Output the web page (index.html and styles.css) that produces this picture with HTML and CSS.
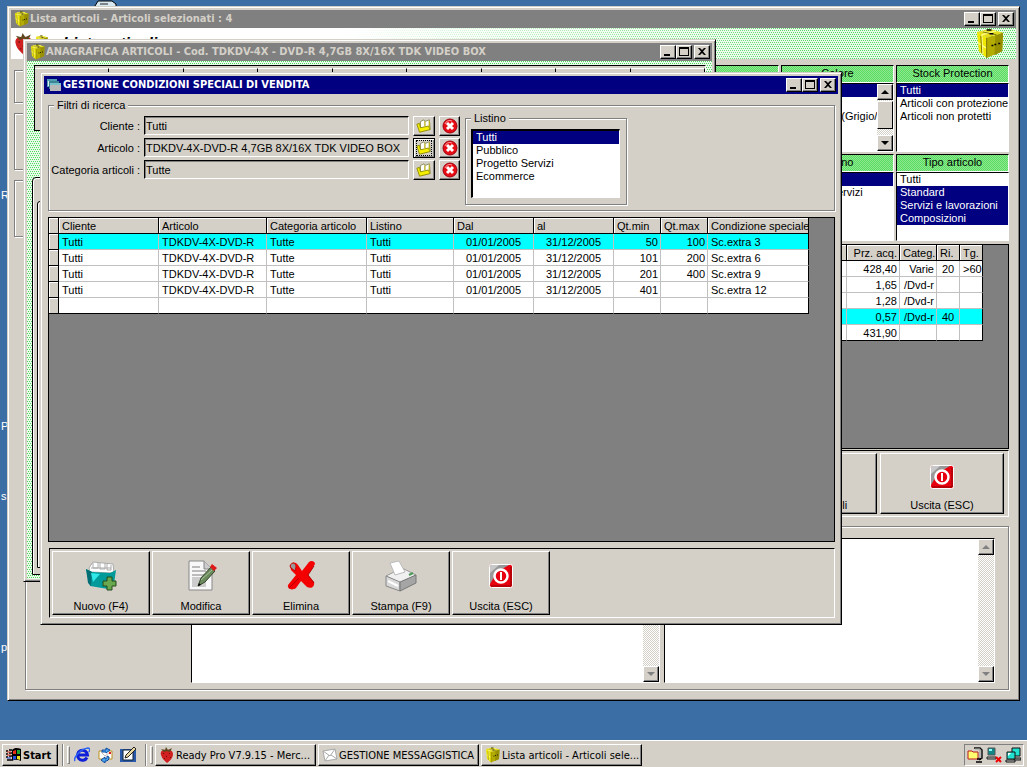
FILE: index.html
```html
<!DOCTYPE html>
<html lang="it">
<head>
<meta charset="utf-8">
<title>Ready Pro - Lista articoli</title>
<link rel="stylesheet" href="styles.css">
</head>
<body>
<svg class="defs" aria-hidden="true">
  <symbol id="cube" viewBox="0 0 32 32">
    <path d="M2 4 15 1 29 5 12 10Z" fill="#e4dc18"/>
    <path d="M2 4 12 10 12 31 4 24Z" fill="#f0e800"/>
    <path d="M12 10 29 5 28 24 12 31Z" fill="#b4ac00"/>
    <path d="M21 8 29 5 28 24 20 28Z" fill="#989000"/>
    <path d="M7 3 20 7M7 7 8 27M3 15 12 21M22 3 7 7" stroke="#fffb80" stroke-width="1.500" fill="none"/>
    <path d="M8 4 22 7M6 8 7 26M12 10 12 31" stroke="#7c7600" fill="none"/>
    <path d="M17 18h2M20 17h2M24 16h2M12 2h5M15 6h4" stroke="#000" stroke-width="1.500"/>
  </symbol>
  <symbol id="berry" viewBox="0 0 16 16">
    <path d="M8 3C3 2 1 5 2 8c1 4 4 6 6 8 3-2 6-5 6-9 0-3-3-5-6-4Z" fill="#d02020"/>
    <path d="M4 6h1v1H4zM7 9h1v1H7zM10 6h1v1h-1zM5 11h1v1H5zM11 10h1v1h-1z" fill="#701010"/>
    <path d="M2 2 6 3 7 0 9 3 13 1 11 5 8 4 5 5Z" fill="#5b4a20"/>
  </symbol>
  <symbol id="windows" viewBox="0 0 14 14">
    <path d="M0 1h10v8H0z" fill="#4f9fb0"/><path d="M1 3h8v5H1z" fill="#d8eef0"/>
    <path d="M2 3h10v8H2z" fill="#3d8391"/><path d="M3 5h11v8H3z" fill="#b8b8b8"/><path d="M3 5h11v2H3z" fill="#78c0cc"/>
  </symbol>
  <symbol id="folder" viewBox="0 0 18 16">
    <path d="M5 3 9 1 10 3 15 1 16 11 5 14Z" fill="#fff" stroke="#8a8a50"/>
    <path d="M1 6 4 5 5 10 14 8 16 12 4 15Z" fill="#f5f000" stroke="#8c8600"/>
    <path d="M10 3 10 8M15 2 15 10" stroke="#b9b020" stroke-width="1.500"/>
  </symbol>
  <symbol id="cancel" viewBox="0 0 16 16">
    <circle cx="8" cy="8" r="7" fill="#e80c14" stroke="#a00010"/>
    <path d="M3 6a5 5 0 0 1 7-3" stroke="#ff9a9a" fill="none"/>
    <path d="m5 5 6 6M11 5l-6 6" stroke="#fff" stroke-width="3"/>
  </symbol>
  <symbol id="new" viewBox="0 0 32 32">
    <path d="M4 8 8 2 28 4 29 13 5 12Z" fill="#fff" stroke="#aaa"/>
    <path d="M8 3v5h5V2M15 3v6h5V3M22 4v6h4V5M6 8h20" stroke="#aaa" fill="none"/>
    <path d="M1 9 7 12 25 13 31 10 29 24 23 29 5 26Z" fill="#009a9a"/>
    <path d="M1 9 7 12 6 26 3 23Z" fill="#006e74"/><path d="M6 13 15 14 8 22Z" fill="#30e8e8"/>
    <path d="M22 17h5v4h4v5h-4v4h-5v-4h-4v-5h4z" fill="#6aa850" stroke="#244a1a"/>
  </symbol>
  <symbol id="edit" viewBox="0 0 32 32">
    <path d="M4 1h15l8 8v21H4z" fill="#f8f8f8" stroke="#888"/><path d="M19 1v8h8" fill="#ccc" stroke="#888"/>
    <path d="M7 7h8M7 11h14M7 15h13" stroke="#bbb" stroke-width="2"/><path d="M7 17h14v10H7z" fill="#ccc"/>
    <path d="m13 26 3-8L26 7l4 4-10 11Z" fill="#6a8a5c" stroke="#33452c"/><path d="m16 20 11-10" stroke="#a9c19c"/>
    <path d="m25 7 2-3 5 4-3 3Z" fill="#e01818"/><path d="m13 26 1-3 2 2Z" fill="#000"/>
  </symbol>
  <symbol id="delete" viewBox="0 0 32 32">
    <path d="M5 6c2-5 6-4 8-1l4 6 7-9c2-2 6-1 6 2l-7 11 6 7c1 5-3 7-7 5l-6-6-5 7c-4 3-9 1-8-3l8-10-5-5Z" fill="#f40000"/>
    <path d="M5 6c2-5 6-3 6 1l-1 4-4-3Z" fill="#999" stroke="#c00"/><path d="m29 6-6 9 6 8M4 28l10-10" stroke="#b00000" fill="none"/>
  </symbol>
  <symbol id="print" viewBox="0 0 32 32">
    <path d="M1 16 17 8 31 15 15 23Z" fill="#f0f0f0" stroke="#999"/>
    <path d="M1 16 15 22V31L1 26Z" fill="#d8d8d8" stroke="#888"/><path d="M15 22 31 15V23L15 31Z" fill="#a5a5a5" stroke="#777"/>
    <path d="M5 3 14 1 20 12 10 15Z" fill="#fff" stroke="#bbb"/>
    <path d="m3 21 10 5" stroke="#fff" stroke-width="2"/><path d="m24 15 4-2" stroke="#4d9a5a" stroke-width="2"/>
  </symbol>
  <symbol id="exit" viewBox="0 0 24 24">
    <rect x=".5" y=".5" width="23" height="23" rx="2" fill="#e80010" stroke="#fff"/>
    <path d="M1 1h19L8 8 1 20Z" fill="#999"/><path d="M1 1h9L1 9Z" fill="#c8c8c8"/>
    <circle cx="12" cy="12" r="6.500" fill="#e80010" stroke="#fff" stroke-width="2.500"/>
    <path d="M12 8V16" stroke="#fff" stroke-width="2"/><path d="M2 22h20V3" stroke="#8c0000" fill="none"/>
  </symbol>
  <symbol id="flag" viewBox="0 0 16 14">
    <path d="M0 3h2M3 2h3M0 6h2M3 5h3M0 9h2M3 8h3M1 12h5" stroke="#000" stroke-width="1.500"/><path d="M1 4h4M1 7h4" stroke="#e03020"/><path d="M1 10h4" stroke="#2040d0"/>
    <path d="M6 2c3-3 6-2 9-1v12c-3-1-6-2-9 0Z" fill="#000"/>
    <path d="M7 3l3-1v4H7z" fill="#e83018"/><path d="M11 2h3v4h-3z" fill="#20a030"/><path d="M7 8h3v3l-3 1z" fill="#2050e0"/><path d="M11 8h3v4l-3-1z" fill="#f0e020"/>
  </symbol>
  <symbol id="ie" viewBox="0 0 16 16">
    <path d="M13 10.500A5 5 0 1 1 13.500 8H5" fill="none" stroke="#1020d8" stroke-width="3"/>
    <path d="M1 14C-1 11 6 2 14 1c2 0 2 2 1 4" fill="none" stroke="#2f66f0" stroke-width="1.500"/>
  </symbol>
  <symbol id="outlook" viewBox="0 0 16 16">
    <path d="M2 4h13v8H2z" fill="#fff" stroke="#b89020"/><path d="m4 5 4 4 5-4" fill="none" stroke="#bbb"/><path d="M12 5h2v2h-2z" fill="#e02020"/>
    <path d="M5 5V3h4V1l4 2-4 3V5Z" fill="#48a8f0" stroke="#1048a0"/><path d="M12 10c0 3-1 4-4 4v2l-4-3 4-3v2c2 0 2-1 2-3Z" fill="#48a8f0" stroke="#1048a0"/>
  </symbol>
  <symbol id="desk" viewBox="0 0 16 16">
    <path d="M0 2h16v13H0z" fill="#2858a8"/><path d="M3 3h10v10H3z" fill="#fff" stroke="#123"/>
    <path d="m5 11 1-3 8-8 2 2-8 8Z" fill="#e8d8a0" stroke="#222"/>
  </symbol>
  <symbol id="mail" viewBox="0 0 16 16">
    <path d="M1 4 13 2 15 12 3 14Z" fill="#fff" stroke="#aaa"/><path d="m1 4 7 5 5-7M3 14l4-6M15 12 9 8" fill="none" stroke="#aaa"/>
  </symbol>
  <symbol id="zip" viewBox="0 0 16 16">
    <path d="M7 1h6l2 2v8l-3 2" fill="none" stroke="#111" stroke-width="1.500"/><path d="M8 2h5v9h-2" fill="none" stroke="#999"/>
    <path d="M1 4h4l1 1h5v7H1z" fill="#ffff70" stroke="#c01818"/><path d="M10 12h4M9 15h6" stroke="#000" stroke-width="1.500"/>
  </symbol>
  <symbol id="netoff" viewBox="0 0 16 16">
    <path d="M2 1h7v7H2z" fill="#108888" stroke="#555"/><path d="M3 2h3v2H3z" fill="#8ff"/><path d="M1 10h9v2H1z" fill="#bbb" stroke="#222"/>
    <path d="m10 10 5 5M15 10l-5 5" stroke="#f00000" stroke-width="2"/>
  </symbol>
  <symbol id="net" viewBox="0 0 16 16">
    <path d="M7 1h8v8H7z" fill="#20e0d0" stroke="#111"/><path d="M9 11h7v2H9z" fill="#aaa" stroke="#111"/>
    <path d="M2 5h8v7H2z" fill="#20e0d0" stroke="#111"/><path d="M3 6h3l-3 3z" fill="#fff"/><path d="M1 13h9v2H1z" fill="#ccc" stroke="#111"/>
  </symbol>
  <symbol id="min" viewBox="0 0 12 10"><path d="M2 7h6v2H2z"/></symbol>
  <symbol id="max" viewBox="0 0 12 10"><path d="M1 0h10v9H1zM2 2v6h8V2z" fill-rule="evenodd"/></symbol>
  <symbol id="close" viewBox="0 0 12 10"><path d="M2 1h2l2 2 2-2h2L7 4.500 10 8H8L6 6 4 8H2l3-3.500z"/></symbol>
  <symbol id="up" viewBox="0 0 8 6"><path d="M0 5 4 1 8 5z"/></symbol>
  <symbol id="down" viewBox="0 0 8 6"><path d="M0 1h8L4 5z"/></symbol>
</svg>

<main class="desktop">
  <span class="shortcut s1">R</span>
  <span class="shortcut s2">P</span>
  <span class="shortcut s3">s</span>
  <span class="shortcut s4">p</span>
  <svg class="deskicon" viewBox="0 0 24 6"><path d="M1 6 4 1h14l4 3v2" fill="#d8e8f0" stroke="#000"/><path d="M6 4h8" stroke="#222"/></svg>

  <section class="window list">
    <header class="title">
      <svg class="i16"><use href="#cube"/></svg>
      <h1>Lista articoli - Articoli selezionati : 4</h1>
      <div class="controls">
        <button aria-label="Riduci"><svg><use href="#min"/></svg></button><button aria-label="Ingrandisci"><svg><use href="#max"/></svg></button><button class="x" aria-label="Chiudi"><svg><use href="#close"/></svg></button>
      </div>
    </header>
    <div class="banner">
      <svg class="logo"><use href="#berry"/></svg>
      <svg class="logo small"><use href="#cube"/></svg>
      <h2>Lista articoli</h2>
      <svg class="box"><use href="#cube"/></svg>
    </div>
    <div class="listbody">
      <div class="filters">
        <div class="strips"><div class="strip first"></div><div class="strip"></div><div class="strip"></div></div>
        <div class="filter"><label class="start-label" for="f1">Marca</label><select id="f1" size="5"><option selected>Tutti</option></select></div>
        <div class="filter"><label for="f2">Colore</label>
          <div class="scrolled"><select id="f2" size="5"><option selected>Tutti</option><option>Bianco</option><option>Multicolore (Grigio/Nero)</option></select>
            <div class="scroll"><button aria-label="Su"><svg><use href="#up"/></svg></button><i class="thumb"></i><button aria-label="Giù"><svg><use href="#down"/></svg></button></div></div></div>
        <div class="filter"><label for="f3">Stock Protection</label><select id="f3" size="5"><option selected>Tutti</option><option>Articoli con protezione</option><option>Articoli non protetti</option></select></div>
        <div class="filter"><label class="start-label" for="f4">Reparto</label><select id="f4" size="5"><option selected>Tutti</option></select></div>
        <div class="filter"><label for="f5">Listino</label><select id="f5" size="5"><option selected>Tutti</option><option>Progetto Servizi</option></select></div>
        <div class="filter"><label for="f6">Tipo articolo</label><select id="f6" size="5" multiple><option>Tutti</option><option selected>Standard</option><option selected>Servizi e lavorazioni</option><option selected>Composizioni</option></select></div>
      </div>
      <div class="grid articles">
        <table>
          <colgroup><col><col class="w53"><col class="w37"><col class="w23"><col class="w23"></colgroup>
          <thead><tr><th></th><th class="num">Prz. acq.</th><th>Categ.</th><th>Ri.</th><th>Tg.</th></tr></thead>
          <tbody>
            <tr><td></td><td class="num">428,40</td><td class="num">Varie</td><td class="mid">20</td><td>&gt;60</td></tr>
            <tr><td></td><td class="num">1,65</td><td class="num">/Dvd-r</td><td></td><td></td></tr>
            <tr><td></td><td class="num">1,28</td><td class="num">/Dvd-r</td><td></td><td></td></tr>
            <tr class="on"><td></td><td class="num">0,57</td><td class="num">/Dvd-r</td><td class="mid">40</td><td></td></tr>
            <tr><td></td><td class="num">431,90</td><td></td><td></td><td></td></tr>
          </tbody>
        </table>
      </div>
      <div class="tools right">
        <button><svg class="i24"><use href="#folder"/></svg><span>Cerca articoli</span></button>
        <button><svg class="i24"><use href="#exit"/></svg><span>Uscita (ESC)</span></button>
      </div>
      <div class="notes">
        <div class="memo main"><textarea aria-label="Descrizione"></textarea><div class="scroll off"><button disabled aria-label="Su"><svg><use href="#up"/></svg></button><button disabled aria-label="Giù"><svg><use href="#down"/></svg></button></div></div>
        <div class="memo"><textarea aria-label="Note"></textarea><div class="scroll off"><button disabled aria-label="Su"><svg><use href="#up"/></svg></button><button disabled aria-label="Giù"><svg><use href="#down"/></svg></button></div></div>
      </div>
    </div>
  </section>

  <section class="window card">
    <header class="title">
      <svg class="i16"><use href="#cube"/></svg>
      <h1>ANAGRAFICA ARTICOLI - Cod. TDKDV-4X - DVD-R 4,7GB 8X/16X TDK VIDEO BOX</h1>
      <div class="controls">
        <button aria-label="Riduci"><svg><use href="#min"/></svg></button><button aria-label="Ingrandisci"><svg><use href="#max"/></svg></button><button class="x" aria-label="Chiudi"><svg><use href="#close"/></svg></button>
      </div>
    </header>
    <div class="cardbody">
      <div class="bar"><i></i><i></i><i></i><i></i><i></i><i></i><i></i><i></i><i></i></div>
      <div class="sheet"><div class="inner"></div></div>
    </div>
  </section>

  <section class="window active">
    <header class="title">
      <svg class="i14"><use href="#windows"/></svg>
      <h1>GESTIONE CONDIZIONI SPECIALI DI VENDITA</h1>
      <div class="controls">
        <button aria-label="Riduci"><svg><use href="#min"/></svg></button><button aria-label="Ingrandisci"><svg><use href="#max"/></svg></button><button class="x" aria-label="Chiudi"><svg><use href="#close"/></svg></button>
      </div>
    </header>
    <div class="body">
      <fieldset class="search">
        <legend>Filtri di ricerca</legend>
        <div class="fields">
          <label for="cli">Cliente :</label><input id="cli" value="Tutti" readonly><button aria-label="Scegli cliente"><svg><use href="#folder"/></svg></button><button aria-label="Azzera cliente"><svg><use href="#cancel"/></svg></button>
          <label for="art">Articolo :</label><input id="art" value="TDKDV-4X-DVD-R 4,7GB 8X/16X TDK VIDEO BOX" readonly><button class="focus" aria-label="Scegli articolo"><svg><use href="#folder"/></svg></button><button aria-label="Azzera articolo"><svg><use href="#cancel"/></svg></button>
          <label for="cat">Categoria articoli :</label><input id="cat" value="Tutte" readonly><button aria-label="Scegli categoria"><svg><use href="#folder"/></svg></button><button aria-label="Azzera categoria"><svg><use href="#cancel"/></svg></button>
        </div>
        <fieldset class="pricelist">
          <legend>Listino</legend>
          <select size="5" aria-label="Listino"><option selected>Tutti</option><option>Pubblico</option><option>Progetto Servizi</option><option>Ecommerce</option></select>
        </fieldset>
      </fieldset>
      <div class="grid terms">
        <table>
          <colgroup><col class="w10"><col class="w100"><col class="w108"><col class="w100"><col class="w87"><col class="w80"><col class="w80"><col class="w47"><col class="w47"><col class="w101"></colgroup>
          <thead><tr><th></th><th>Cliente</th><th>Articolo</th><th>Categoria articolo</th><th>Listino</th><th>Dal</th><th>al</th><th>Qt.min</th><th>Qt.max</th><th>Condizione speciale</th></tr></thead>
          <tbody>
            <tr class="on"><th></th><td>Tutti</td><td>TDKDV-4X-DVD-R</td><td>Tutte</td><td>Tutti</td><td class="mid">01/01/2005</td><td class="mid">31/12/2005</td><td class="num">50</td><td class="num">100</td><td>Sc.extra 3</td></tr>
            <tr><th></th><td>Tutti</td><td>TDKDV-4X-DVD-R</td><td>Tutte</td><td>Tutti</td><td class="mid">01/01/2005</td><td class="mid">31/12/2005</td><td class="num">101</td><td class="num">200</td><td>Sc.extra 6</td></tr>
            <tr><th></th><td>Tutti</td><td>TDKDV-4X-DVD-R</td><td>Tutte</td><td>Tutti</td><td class="mid">01/01/2005</td><td class="mid">31/12/2005</td><td class="num">201</td><td class="num">400</td><td>Sc.extra 9</td></tr>
            <tr><th></th><td>Tutti</td><td>TDKDV-4X-DVD-R</td><td>Tutte</td><td>Tutti</td><td class="mid">01/01/2005</td><td class="mid">31/12/2005</td><td class="num">401</td><td></td><td>Sc.extra 12</td></tr>
            <tr><th></th><td></td><td></td><td></td><td></td><td></td><td></td><td></td><td></td><td></td></tr>
          </tbody>
        </table>
      </div>
      <div class="tools">
        <button><svg class="i32"><use href="#new"/></svg><span>Nuovo (F4)</span></button>
        <button><svg class="i32"><use href="#edit"/></svg><span>Modifica</span></button>
        <button><svg class="i32"><use href="#delete"/></svg><span>Elimina</span></button>
        <button><svg class="i32"><use href="#print"/></svg><span>Stampa (F9)</span></button>
        <button><svg class="i24"><use href="#exit"/></svg><span>Uscita (ESC)</span></button>
      </div>
    </div>
  </section>
</main>

<footer class="taskbar">
  <button class="start"><svg><use href="#flag"/></svg>Start</button>
  <i class="sep"></i><i class="grip"></i>
  <nav class="quick">
    <button aria-label="Internet Explorer"><svg class="i16"><use href="#ie"/></svg></button>
    <button aria-label="Outlook Express"><svg class="i16"><use href="#outlook"/></svg></button>
    <button aria-label="Mostra desktop"><svg class="i16"><use href="#desk"/></svg></button>
  </nav>
  <i class="sep"></i><i class="grip"></i>
  <div class="tasks">
    <button><svg class="i16"><use href="#berry"/></svg><span>Ready Pro V7.9.15 - Merc...</span></button>
    <button><svg class="i16"><use href="#mail"/></svg><span>GESTIONE MESSAGGISTICA</span></button>
    <button><svg class="i16"><use href="#cube"/></svg><span>Lista articoli - Articoli sele...</span></button>
  </div>
  <div class="tray">
    <svg class="i16"><use href="#zip"/></svg><svg class="i16"><use href="#netoff"/></svg><svg class="i16"><use href="#net"/></svg>
  </div>
</footer>
</body>
</html>
```

FILE: styles.css
```css
:root {
  --face: #d4d0c8;
  --shade: #808080;
  --navy: #000080;
  --ui: "Liberation Sans", Arial, sans-serif;
  --caption: "DejaVu Sans Condensed", "DejaVu Sans", sans-serif;
  --checker-green: url("data:image/svg+xml,%3Csvg xmlns='http://www.w3.org/2000/svg' width='2' height='2' shape-rendering='crispEdges'%3E%3Cpath fill='%2390e690' d='M0 0h2v2H0z'/%3E%3Cpath fill='%2358de60' d='M0 0h1v1H0zM1 1h1v1H1z'/%3E%3C/svg%3E");
  --checker-pale: url("data:image/svg+xml,%3Csvg xmlns='http://www.w3.org/2000/svg' width='4' height='4' shape-rendering='crispEdges'%3E%3Cpath fill='%23e8fae8' d='M0 0h4v4H0z'/%3E%3Cpath fill='%2350d860' d='M0 0h1v1H0zM2 0h1v1H2zM1 2h1v1H1zM3 2h1v1H3z'/%3E%3C/svg%3E");
  --checker-grey: url("data:image/svg+xml,%3Csvg xmlns='http://www.w3.org/2000/svg' width='2' height='2' shape-rendering='crispEdges'%3E%3Cpath fill='%23fff' d='M0 0h2v2H0z'/%3E%3Cpath fill='%23d4d0c8' d='M0 0h1v1H0zM1 1h1v1H1z'/%3E%3C/svg%3E");
}
* { box-sizing: border-box; }
body {
  margin: 0;
  height: 100vh;
  display: flex;
  flex-direction: column;
  overflow: hidden;
  background: #3a6ea5;
  color: #000;
  font: 11px/13px var(--ui);
}
button, input, select, textarea { font: inherit; color: inherit; margin: 0; border-radius: 0; outline: 0; }
h1, h2 { margin: 0; }
svg { display: block; flex: none; }
.defs { position: absolute; width: 0; height: 0; }
.i14 { width: 14px; height: 14px; }
.i16 { width: 16px; height: 16px; }
.i24 { width: 24px; height: 24px; }
.i32 { width: 32px; height: 32px; }

.desktop { position: relative; flex: 1; min-height: 0; }
.shortcut { position: absolute; left: 1px; color: #fff; }
.s1 { top: 189px; }
.s2 { top: 420px; }
.s3 { top: 490px; }
.s4 { top: 641px; }
.deskicon { position: absolute; left: 94px; top: 0; width: 24px; height: 6px; }

/* windows */
.window {
  position: absolute;
  display: flex;
  flex-direction: column;
  padding: 3px;
  background: var(--face);
  border: 1px solid;
  border-color: var(--face) #000 #000 var(--face);
  box-shadow: inset 1px 1px #fff, inset -1px -1px var(--shade);
}
.list { left: 7px; right: 7px; top: 6px; bottom: 39px; }
.card { left: 23px; top: 39px; width: 693px; height: 543px; }
.active { left: 40px; top: 72px; width: 802px; height: 553px; }
.title {
  display: flex;
  align-items: center;
  height: 18px;
  flex: none;
  padding: 0 2px 0 3px;
  background: var(--shade);
  color: var(--face);
}
.active .title { gap: 2px; background: var(--navy); color: #fff; }
.title h1 { flex: 1; font: bold 11px/18px var(--caption); white-space: nowrap; overflow: hidden; }
.controls { display: flex; }
.controls button, .scroll button {
  display: grid;
  place-items: center;
  padding: 0;
  background: var(--face);
  border: 1px solid;
  border-color: #fff #000 #000 #fff;
  box-shadow: inset -1px -1px var(--shade);
}
.controls button { width: 16px; height: 14px; }
.controls .x { margin-left: 2px; }
.controls svg { width: 12px; height: 10px; }

/* article list window */
.banner {
  display: flex;
  flex: none;
  height: 31px;
  padding: 0 10px 0 2px;
  background: linear-gradient(90deg, #fff 33%, transparent 80%), var(--checker-pale);
}
.logo { width: 22px; height: 22px; margin-top: 5px; }
.small { width: 14px; height: 14px; margin-top: 7px; }
.banner h2 { flex: 1; margin: 6px 0 0 14px; font: italic bold 16px/20px var(--ui); }
.box { width: 31px; height: 31px; }
.listbody { flex: 1; display: flex; flex-direction: column; padding: 6px 7px 7px 3px; min-height: 0; }
.filters {
  display: grid;
  grid-template-columns: 1fr 113px 113px 113px;
  gap: 2px;
}
.strips { grid-row: span 2; display: flex; flex-direction: column; gap: 10px; padding-top: 5px; }
.strip { height: 57px; border: 1px solid var(--shade); box-shadow: inset 1px 1px #fff, 1px 1px #fff; }
.strip.first { height: 33px; }
.filter { display: flex; flex-direction: column; height: 87px; min-width: 0; }
.filter label {
  height: 18px;
  text-align: center;
  line-height: 15px;
  border: 1px solid;
  border-color: #000 #fff #fff #000;
  background: var(--checker-green);
}
.filter .start-label { text-align: left; padding-left: 3px; }
select {
  display: block;
  width: 100%;
  padding: 0;
  background: #fff;
  border: 1px solid;
  border-color: #000 #fff #fff #000;
  overflow: hidden;
  scrollbar-width: none;
}
option { height: 13px; min-height: 13px; padding: 0 0 0 3px; line-height: 13px; }
option:checked { background: var(--navy) linear-gradient(var(--navy), var(--navy)); -webkit-text-fill-color: #fff; }
.filter select { flex: 1; min-height: 0; }
.scrolled { flex: 1; display: flex; min-height: 0; border: 1px solid; border-color: #000 #fff #fff #000; }
.scrolled select { border: 0; height: 100%; min-width: 0; }
.scroll {
  display: flex;
  flex-direction: column;
  justify-content: space-between;
  flex: none;
  width: 16px;
  background: var(--checker-grey);
}
.scroll button { width: 16px; height: 16px; }
.scroll svg { width: 8px; height: 6px; }
.scroll.off svg { fill: var(--shade); }
.thumb { height: 28px; margin-bottom: 6px; background: var(--face); border: 1px solid; border-color: #fff #000 #000 #fff; }

.grid { background: var(--shade); border: 1px solid #000; overflow: hidden; }
table { border-collapse: separate; border-spacing: 0; table-layout: fixed; width: 100%; }
th, td { height: 16px; padding: 1px 3px 0; white-space: nowrap; overflow: hidden; line-height: 14px; font-weight: normal; text-align: left; }
th { background: var(--face); border: 0 solid #000; border-width: 0 1px 1px 0; box-shadow: inset 1px 1px #fff; }
td { background: #fff; border: 0 solid #c0c0c0; border-width: 0 1px 1px 0; }
td:last-child { border-right-color: #000; }
tr:last-child td { border-bottom-color: #000; }
.on td { background: #0ff; }
.num { text-align: right; padding-right: 2px; }
.mid { text-align: center; padding: 1px 1px 0; }
.w10 { width: 10px; }
.w23 { width: 23px; }
.w37 { width: 37px; }
.w47 { width: 47px; }
.w53 { width: 53px; }
.w80 { width: 80px; }
.w87 { width: 87px; }
.w100 { width: 100px; }
.w101 { width: 101px; }
.w108 { width: 108px; }
.articles { height: 205px; margin: 3px 0 0 11px; padding-right: 25px; }

.tools {
  display: flex;
  gap: 2px;
  padding: 2px;
  border: 1px solid;
  border-color: #000 #fff #fff #000;
}
.tools button {
  display: grid;
  grid-template-rows: 1fr 13px;
  row-gap: 3px;
  place-items: center;
  width: 98px;
  padding: 3px 0 1px;
  background: var(--face);
  border: 1px solid;
  border-color: #fff #000 #000 #fff;
  box-shadow: inset -1px -1px var(--shade);
}
.tools.right { height: 67px; margin: 1px 0 0 11px; padding-right: 4px; justify-content: flex-end; gap: 3px; }
.tools.right button { width: 124px; }
.notes {
  flex: 1;
  min-height: 0;
  display: flex;
  gap: 4px;
  margin: 9px 0 0 11px;
  padding: 11px 13px 6px 165px;
  border: 1px solid var(--shade);
  box-shadow: inset 1px 1px #fff, 1px 1px #fff;
}
.memo { flex: 1; display: flex; min-width: 0; border: 1px solid; border-color: #000 #fff #fff #000; }
.memo.main { flex: 0 0 469px; }
.memo textarea { flex: 1; min-width: 0; border: 0; resize: none; background: #fff; }

/* article card window */
.cardbody { flex: 1; padding: 4px 6px 4px 5px; background: var(--checker-pale); }
.bar {
  display: flex;
  height: 66px;
  margin-left: 2px;
  padding: 2px 0 0;
  background: var(--face);
  border: 1px solid;
  border-color: #000 #fff #000 #000;
}
.bar i { flex: 1; height: 4px; border-top: 1px solid #fff; border-right: 1px solid #000; }
.sheet { height: 398px; margin-top: 46px; padding: 23px 4px 6px; background: var(--face); border: 1px solid #000; border-radius: 4px 0 0; box-shadow: inset 1px 1px #fff; }
.inner { height: 100%; background: var(--face); border: 1px solid #000; border-radius: 3px 0 0; box-shadow: inset 1px 1px #fff; }

/* special sale terms window */
.body { flex: 1; display: flex; flex-direction: column; min-height: 0; padding: 5px 3px 3px 4px; }
fieldset { margin: 0; min-width: 0; border: 1px solid var(--shade); box-shadow: inset 1px 1px #fff, 1px 1px #fff; }
legend { padding: 0 3px; margin-left: 5px; background: var(--face); }
.search { display: flex; align-items: flex-start; gap: 5px; height: 112px; padding: 0; }
.fields { display: grid; grid-template-columns: 91px 265px 22px 21px; grid-auto-rows: 20px; column-gap: 4px; row-gap: 2px; padding-top: 4px; }
.fields label { text-align: right; line-height: 20px; white-space: nowrap; }
.fields input { width: 100%; height: 19px; padding: 0 1px; background: var(--face); border: 1px solid; border-color: #000 #fff #fff #000; box-shadow: inset 1px 1px var(--shade); }
.fields button { display: grid; place-items: center; padding: 0; background: var(--face); border: 1px solid; border-color: #fff #000 #000 #fff; box-shadow: inset -1px -1px var(--shade); }
.fields .focus { border-color: #000; box-shadow: inset 1px 1px #fff, inset -1px -1px var(--shade); }
.focus svg { outline: 1px dotted #000; outline-offset: -1px; }
.fields svg { width: 16px; height: 16px; }
.pricelist { width: 162px; height: 93px; padding: 4px 6px 7px 5px; }
.pricelist legend { margin-left: 0; }
.pricelist select { height: 69px; border-width: 2px 1px 1px 2px; }
.terms { flex: 1; margin-top: 6px; }
.terms table { width: 760px; }
.active .tools { height: 70px; margin: 6px 0 0 1px; }

/* taskbar */
.taskbar {
  display: flex;
  flex: none;
  height: 27px;
  padding: 3px 3px 1px 2px;
  background: var(--face);
  border-top: 1px solid #fff;
  font: 11px/13px var(--caption);
}
.start, .tasks button {
  display: flex;
  align-items: center;
  gap: 1px;
  height: 22px;
  padding: 0 2px 0 3px;
  white-space: nowrap;
  background: var(--face);
  border: 1px solid;
  border-color: #fff #000 #000 #fff;
  box-shadow: inset -1px -1px var(--shade);
}
.start { width: 56px; font-weight: bold; }
.start svg { width: 16px; height: 14px; }
.sep { width: 2px; margin: 0 3px 0 4px; border-left: 1px solid var(--shade); border-right: 1px solid #fff; }
.grip { width: 3px; margin: 2px 0; border: 1px solid; border-color: #fff var(--shade) var(--shade) #fff; }
.quick { display: flex; align-items: center; gap: 7px; margin: 0 5px 0 4px; }
.quick button { padding: 0; border: 0; background: none; }
.tasks { flex: 1; display: flex; gap: 2px; margin-left: 2px; min-width: 0; }
.tasks button { width: 161px; overflow: hidden; }
.tray { display: flex; align-items: center; gap: 3px; height: 22px; padding: 0 2px; border: 1px solid; border-color: var(--shade) #fff #fff var(--shade); }
```
